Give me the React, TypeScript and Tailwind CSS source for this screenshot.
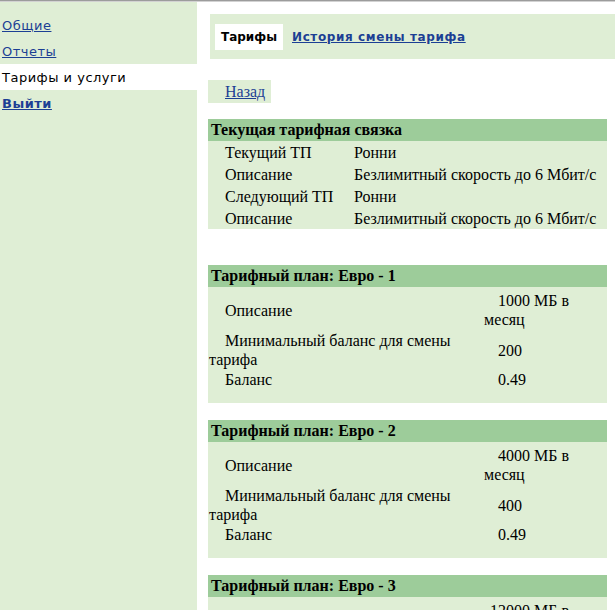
import React from "react";

const menu = [
  { label: "Общие", href: "#" },
  { label: "Отчеты", href: "#" },
  { label: "Тарифы и услуги", active: true },
  { label: "Выйти", href: "#", bold: true },
];

const current = [
  ["Текущий ТП", "Ронни"],
  ["Описание", "Безлимитный скорость до 6 Мбит/с"],
  ["Следующий ТП", "Ронни"],
  ["Описание", "Безлимитный скорость до 6 Мбит/с"],
];

const plans = [
  { name: "Евро - 1", desc: "1000 МБ в месяц", min: "200", balance: "0.49", wide: false },
  { name: "Евро - 2", desc: "4000 МБ в месяц", min: "400", balance: "0.49", wide: false },
  { name: "Евро - 3", desc: "12000 МБ в месяц", min: "800", balance: "0.49", wide: true },
];

const PlanTable = ({ plan }: { plan: (typeof plans)[number] }) => {
  const labelW = plan.wide ? "w-[268px]" : "w-[276px]";
  const valueW = plan.wide ? "w-[100px]" : "w-[86px]";
  return (
    <div className="w-[399px] bg-[#dfeed5] pb-[12px]">
      <div className="h-[22px] bg-[#9dcc9a] pl-[3px] font-bold leading-[22px]">
        Тарифный план: {plan.name}
      </div>
      <div className="mt-[4px] flex items-center">
        <div className={`${labelW} pl-[1px] indent-4 leading-[19px]`}>Описание</div>
        <div className={`${valueW} indent-[14px] leading-[19px]`}>{plan.desc}</div>
      </div>
      <div className="mt-[2px] flex items-center">
        <div className={`${labelW} pl-[1px] pr-[12px] indent-4 leading-[19px]`}>
          Минимальный баланс для смены тарифа
        </div>
        <div className={`${valueW} indent-[14px] leading-[19px]`}>{plan.min}</div>
      </div>
      <div className="flex items-center">
        <div className={`${labelW} pl-[1px] indent-4 leading-[22px]`}>Баланс</div>
        <div className={`${valueW} indent-[14px] leading-[22px]`}>{plan.balance}</div>
      </div>
    </div>
  );
};

export default function App() {
  return (
    <div className="min-h-screen bg-white">
      <div className="h-[1px] bg-[#9c9c9c]" />
      <div className="h-[1px] bg-[#d2d2d2]" />
      <div className="flex">
        <div className="min-h-[608px] w-[197px] shrink-0 bg-[#dfeed5] pt-[10px] font-['DejaVu_Sans',sans-serif] text-[13px] tracking-[0.5px]">
          {menu.map((m) => (
            <div
              key={m.label}
              className={
                m.active
                  ? "h-[26px] overflow-hidden bg-white pl-[2px] leading-[28px] text-black"
                  : "h-[26px] overflow-hidden pl-[2px] leading-[28px]"
              }
            >
              {m.active ? (
                m.label
              ) : (
                <a href={m.href} className={m.bold ? "font-bold text-[#1c3f94] underline" : "text-[#1c3f94] underline"}>
                  {m.label}
                </a>
              )}
            </div>
          ))}
        </div>

        <div className="flex-1 pl-[11px] font-['Liberation_Serif',serif] text-[16px] text-black">
          <div className="ml-[2px] mt-[12px] flex h-[45px] items-center gap-[9px] bg-[#dfeed5] pl-[5px] font-['DejaVu_Sans',sans-serif] text-[12px] font-bold">
            <div className="flex h-[26px] w-[68px] items-center justify-center bg-white">Тарифы</div>
            <a href="#" className="tracking-[0.6px] text-[#1c3f94] underline">
              История смены тарифа
            </a>
          </div>

          <div className="mt-[21px] flex h-[23px] w-[63px] items-center bg-[#dfeed5] pl-[17px]">
            <a href="#" className="text-[#1c3f94] underline">
              Назад
            </a>
          </div>

          <div className="mt-[16px] w-[399px] bg-[#dfeed5]">
            <div className="h-[22px] bg-[#9dcc9a] pl-[3px] font-bold leading-[22px]">
              Текущая тарифная связка
            </div>
            {current.map(([k, v], i) => (
              <div key={i} className="flex h-[22px] items-center pt-[1px]">
                <div className="w-[146px] pl-[17px]">{k}</div>
                <div className="whitespace-nowrap">{v}</div>
              </div>
            ))}
          </div>

          <div className="mt-[36px] flex flex-col gap-[17px]">
            {plans.map((p) => (
              <PlanTable key={p.name} plan={p} />
            ))}
          </div>
        </div>
      </div>
    </div>
  );
}
